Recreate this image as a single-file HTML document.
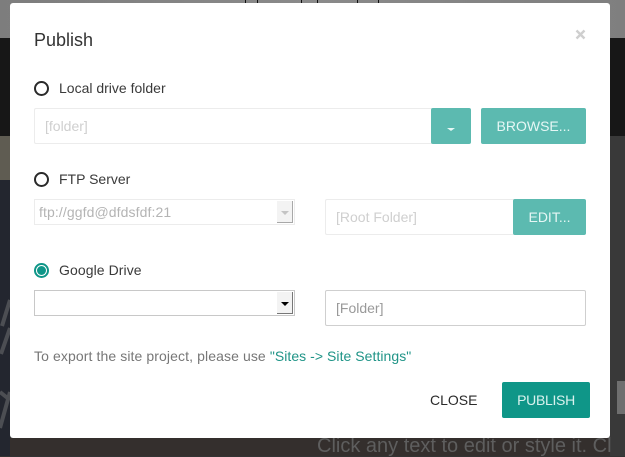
<!DOCTYPE html>
<html><head><meta charset="utf-8">
<style>
html,body{margin:0;padding:0;width:625px;height:456px;overflow:hidden;background:#333;font-family:"Liberation Sans",sans-serif}
.a{position:absolute;box-sizing:border-box}
.t{position:absolute;white-space:nowrap}
.btn{position:absolute;box-sizing:border-box;background:#5cbab0;border-radius:2px;color:#e6f7f5;font-size:14px;text-align:center}
.radio{position:absolute;box-sizing:border-box;width:15px;height:15px;border-radius:50%;border:2px solid #2a2a2a;left:34px}
.lbl{position:absolute;left:59px;font-size:14px;color:#3a3a3a;white-space:nowrap;line-height:16px}
</style></head><body>
<div class="a" style="left:0;top:0;width:625px;height:38px;background:linear-gradient(90deg,#7d7d7d,#8a8a8a 50%,#7f7f7f)"></div>
<div class="a" style="left:0;top:38px;width:625px;height:98px;background:#171717"></div>
<div class="a" style="left:0;top:136px;width:10px;height:48px;background:#5f5c52"></div>
<div class="a" style="left:0;top:180px;width:10px;height:276px;background:#23262f"></div>
<div class="a" style="left:610px;top:136px;width:15px;height:320px;background:#393939"></div>
<div class="a" style="left:10px;top:438px;width:600px;height:18px;background:#342f2d"></div>
<div class="a" style="left:617px;top:381px;width:8px;height:33px;background:#6f6f6f"></div>
<div class="a" style="left:245px;top:0;width:1px;height:3px;background:#111"></div>
<div class="a" style="left:257px;top:0;width:1px;height:3px;background:#111"></div>
<div class="a" style="left:301px;top:0;width:1px;height:3px;background:#111"></div>
<div class="a" style="left:317px;top:0;width:1px;height:3px;background:#111"></div>
<div class="a" style="left:357px;top:0;width:1px;height:3px;background:#111"></div>
<div class="a" style="left:378px;top:0;width:1px;height:3px;background:#111"></div>
<svg class="a" style="left:0;top:270px" width="10" height="186"><path d="M2 56L10 30M1 84L10 58M0 122L10 130M0 158L10 122" stroke="#4c4e53" stroke-width="4" fill="none"/></svg>
<div class="t" style="left:317px;top:436px;font-size:20px;line-height:20px;color:#5e5e5e">Click any text to edit or style it. Cl</div>

<div class="a" style="left:10px;top:3px;width:600px;height:435px;background:#fff;border-radius:3px"></div>

<div class="t" style="left:34px;top:30px;font-size:18px;line-height:21px;color:#333">Publish</div>
<svg class="a" style="left:575px;top:29px" width="11" height="11"><path d="M1.5 1.5L9.5 9.5M9.5 1.5L1.5 9.5" stroke="#cfcfcf" stroke-width="2.4" fill="none"/></svg>

<div class="radio" style="top:81px"></div>
<div class="lbl" style="top:80px">Local drive folder</div>
<div class="a" style="left:34px;top:108px;width:398px;height:36px;border:1px solid #ececec;border-right:0;border-radius:2px 0 0 2px"></div>
<div class="t" style="left:45px;top:118px;font-size:14px;line-height:16px;color:#cfcfcf">[folder]</div>
<div class="btn" style="left:431px;top:108px;width:40px;height:36px"></div>
<div class="a" style="left:447px;top:128px;width:0;height:0;border-left:4px solid transparent;border-right:4px solid transparent;border-top:3px solid #e6f7f5"></div>
<div class="btn" style="left:481px;top:108px;width:105px;height:36px;line-height:36px">BROWSE...</div>

<div class="radio" style="top:172px"></div>
<div class="lbl" style="top:171px">FTP Server</div>
<div class="a" style="left:34px;top:199px;width:261px;height:26px;border:1px solid #ececec"></div>
<div class="t" style="left:39px;top:204px;font-size:14px;line-height:16px;color:#b4b4b4;letter-spacing:.1px">ftp://ggfd@dfdsfdf:21</div>
<div class="a" style="left:277px;top:201px;width:16px;height:22px;background:#f3f3f3;border-right:1px solid #a8a8a8;border-bottom:1px solid #a8a8a8"></div>
<div class="a" style="left:281px;top:211px;width:0;height:0;border-left:4px solid transparent;border-right:4px solid transparent;border-top:4px solid #c4c4c4"></div>
<div class="a" style="left:325px;top:199px;width:190px;height:36px;border:1px solid #ececec;border-right:0;border-radius:2px 0 0 2px"></div>
<div class="t" style="left:336px;top:209px;font-size:14px;line-height:16px;color:#cfcfcf">[Root Folder]</div>
<div class="btn" style="left:513px;top:199px;width:73px;height:36px;line-height:36px">EDIT...</div>

<div class="radio" style="top:263px;border-color:#0f9688"></div>
<div class="a" style="left:37px;top:266px;width:9px;height:9px;border-radius:50%;background:#0f9688"></div>
<div class="lbl" style="top:262px;letter-spacing:.08px">Google Drive</div>
<div class="a" style="left:34px;top:290px;width:261px;height:26px;border:1px solid #c8c8c8"></div>
<div class="a" style="left:277px;top:292px;width:16px;height:22px;background:#f3f3f3;border-right:1px solid #777;border-bottom:1px solid #777"></div>
<div class="a" style="left:281px;top:302px;width:0;height:0;border-left:4px solid transparent;border-right:4px solid transparent;border-top:4px solid #000"></div>
<div class="a" style="left:325px;top:290px;width:261px;height:36px;border:1px solid #cfcfcf;border-radius:2px"></div>
<div class="t" style="left:336px;top:300px;font-size:14px;line-height:16px;color:#999">[Folder]</div>

<div class="t" style="left:34px;top:348px;font-size:14px;line-height:16px;color:#777;letter-spacing:.1px">To export the site project, please use <span style="color:#1f9487;letter-spacing:.05px">"Sites -&gt; Site Settings"</span></div>

<div class="t" style="left:430px;top:392px;font-size:14px;line-height:16px;color:#2a2a2a">CLOSE</div>
<div class="btn" style="left:502px;top:382px;width:88px;height:36px;line-height:36px;background:#0f9688;color:#d8f2ee;letter-spacing:-.3px">PUBLISH</div>
</body></html>
